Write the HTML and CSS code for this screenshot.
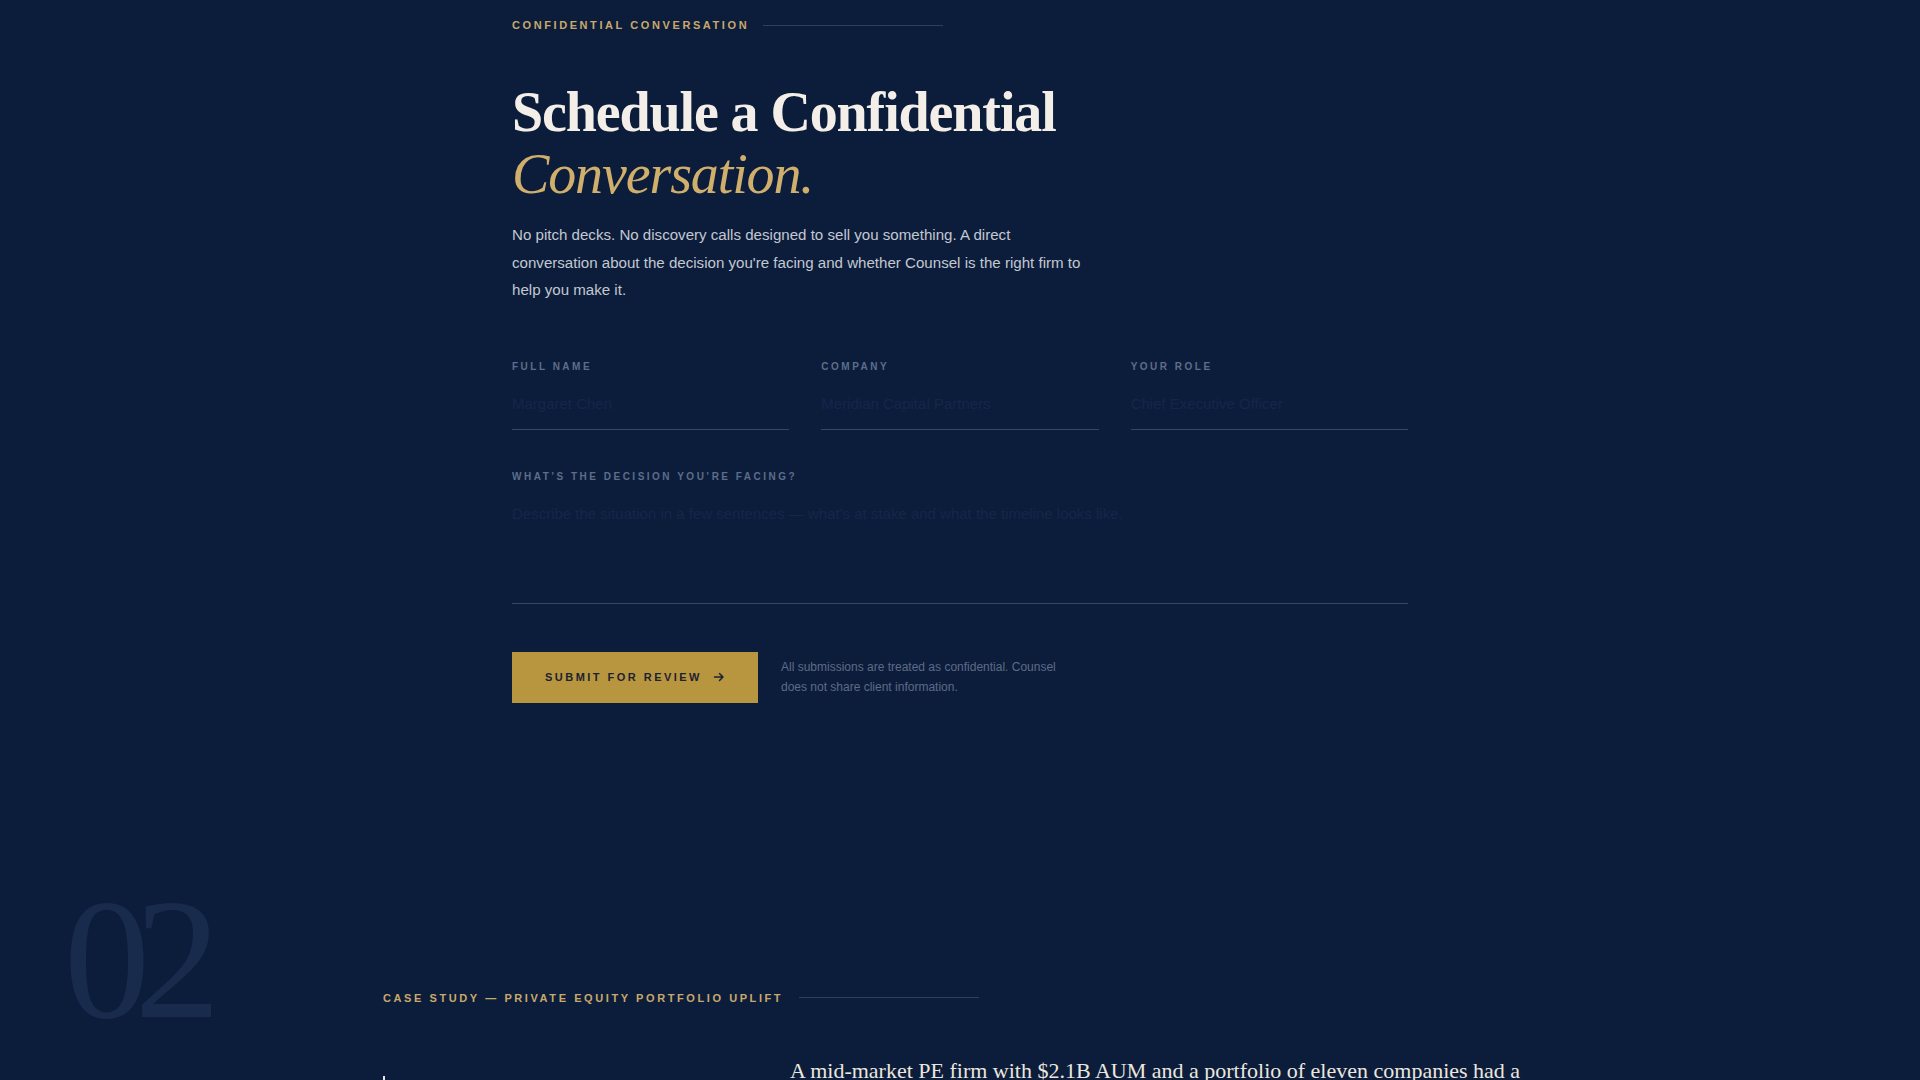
FILE: index.html
```html
<!DOCTYPE html>
<html lang="en">
<head>
<meta charset="utf-8">
<title>Schedule a Confidential Conversation</title>
<link rel="stylesheet" href="styles.css">
</head>
<body>
<main class="page">
  <section class="contact">
    <div class="eyebrow">
      <span class="eyebrow-text">Confidential Conversation</span>
      <span class="eyebrow-rule"></span>
    </div>
    <h1 class="title">Schedule a Confidential<br><em>Conversation.</em></h1>
    <p class="lede">No pitch decks. No discovery calls designed to sell you something. A direct conversation about the decision you're facing and whether Counsel is the right firm to help you make it.</p>

    <form class="form">
      <div class="row">
        <label class="field">
          <span class="field-label">Full Name</span>
          <input class="input" type="text" placeholder="Margaret Chen">
        </label>
        <label class="field">
          <span class="field-label">Company</span>
          <input class="input" type="text" placeholder="Meridian Capital Partners">
        </label>
        <label class="field">
          <span class="field-label">Your Role</span>
          <input class="input" type="text" placeholder="Chief Executive Officer">
        </label>
      </div>
      <label class="field field-wide">
        <span class="field-label">What’s the decision you’re facing?</span>
        <textarea class="textarea" placeholder="Describe the situation in a few sentences — what's at stake and what the timeline looks like."></textarea>
      </label>
      <div class="actions">
        <button class="submit" type="button">
          <span>Submit for Review</span>
          <svg class="arrow" width="12" height="12" viewBox="0 0 12 12" aria-hidden="true"><path d="M1.5 6h8.5M6.5 2.5L10 6l-3.5 3.5" fill="none" stroke="currentColor" stroke-width="1.5" stroke-linecap="round" stroke-linejoin="round"/></svg>
        </button>
        <p class="note">All submissions are treated as confidential. Counsel does not share client information.</p>
      </div>
    </form>
  </section>

  <section class="case">
    <div class="case-num">02</div>
    <div class="case-body">
      <div class="eyebrow">
        <span class="eyebrow-text">Case Study — Private Equity Portfolio Uplift</span>
        <span class="eyebrow-rule"></span>
      </div>
      <div class="case-grid">
        <div class="case-marker"></div>
        <p class="case-text">A mid-market PE firm with $2.1B AUM and a portfolio of eleven companies had a valuation problem that no one inside the firm wanted to name.</p>
      </div>
    </div>
  </section>
</main>
</body>
</html>
```

FILE: styles.css
```css
* { box-sizing: border-box; }

html, body {
  margin: 0;
  padding: 0;
  background: #0c1d3b;
}

body {
  font-family: "Liberation Sans", Arial, sans-serif;
  color: #f3efe8;
  overflow: hidden;
  height: 1080px;
}

.page {
  width: 1920px;
}

/* ---------- contact section ---------- */
.contact {
  width: 896px;
  margin: 0 auto;
  padding: 17px 0 170px;
}

.eyebrow {
  display: flex;
  align-items: center;
  gap: 14px;
  height: 16px;
}

.eyebrow-text {
  font-size: 11px;
  line-height: 16px;
  font-weight: 700;
  letter-spacing: 0.235em;
  text-transform: uppercase;
  color: #c9a96b;
}

.eyebrow-rule {
  width: 180px;
  height: 1px;
  background: #2e3f5e;
}

.title {
  margin: 49px 0 0;
  font-family: "Liberation Serif", "Times New Roman", serif;
  font-weight: 700;
  font-size: 56px;
  line-height: 1.1;
  letter-spacing: -0.02em;
  color: #f3efe8;
}

.title em {
  font-weight: 400;
  font-style: italic;
  color: #d0ae6c;
}

.lede {
  margin: 16px 0 0;
  max-width: 578px;
  font-size: 15.1px;
  line-height: 27.5px;
  color: #c3c8d2;
}

.form {
  margin-top: 55px;
}

.row {
  display: grid;
  grid-template-columns: repeat(3, 1fr);
  gap: 32px;
}

.field {
  display: flex;
  flex-direction: column;
}

.field-label {
  font-size: 10px;
  line-height: 16px;
  font-weight: 700;
  letter-spacing: 0.25em;
  text-transform: uppercase;
  color: #5d6d8a;
}

.input,
.textarea {
  margin-top: 12px;
  background: transparent;
  border: 0;
  border-bottom: 1px solid #34466a;
  outline: none;
  font-family: "Liberation Sans", Arial, sans-serif;
  font-size: 15px;
  color: #e8e4dc;
}

.input {
  padding: 8px 0 16px;
  line-height: 18px;
  height: 43px;
}

.input::placeholder,
.textarea::placeholder {
  color: #15264a;
  opacity: 1;
}

.field-wide {
  margin-top: 39px;
}

.textarea {
  height: 107px;
  padding: 5px 0 0;
  line-height: 24px;
  resize: none;
}

.actions {
  margin-top: 48px;
  display: flex;
  align-items: center;
  gap: 23px;
}

.submit {
  display: flex;
  align-items: center;
  gap: 11px;
  height: 51px;
  padding: 0 33px;
  border: 0;
  background: #b8963f;
  color: #1b2230;
  font-family: "Liberation Sans", Arial, sans-serif;
  font-size: 11px;
  font-weight: 700;
  letter-spacing: 0.225em;
  text-transform: uppercase;
  cursor: pointer;
}

.arrow {
  display: block;
}

.note {
  margin: 0;
  max-width: 290px;
  font-size: 12px;
  line-height: 20.5px;
  color: #5d6b86;
}

/* ---------- case study ---------- */
.case {
  position: relative;
  padding: 117px 0 0 383px;
}

.case-num {
  position: absolute;
  left: 64px;
  top: 0;
  font-family: "Liberation Serif", "Times New Roman", serif;
  font-size: 172px;
  line-height: 1;
  letter-spacing: -0.09em;
  color: #192b4c;
}

.case-body .eyebrow {
  gap: 16px;
}

.case-grid {
  margin-top: 48px;
  display: grid;
  grid-template-columns: 360px 760px;
  column-gap: 47px;
}

.case-marker {
  width: 2px;
  height: 40px;
  margin-top: 22px;
  background: #e8e4dc;
}

.case-text {
  margin: 0;
  font-family: "Liberation Serif", "Times New Roman", serif;
  font-size: 22px;
  line-height: 1.5;
  color: #ebe7df;
}
```
